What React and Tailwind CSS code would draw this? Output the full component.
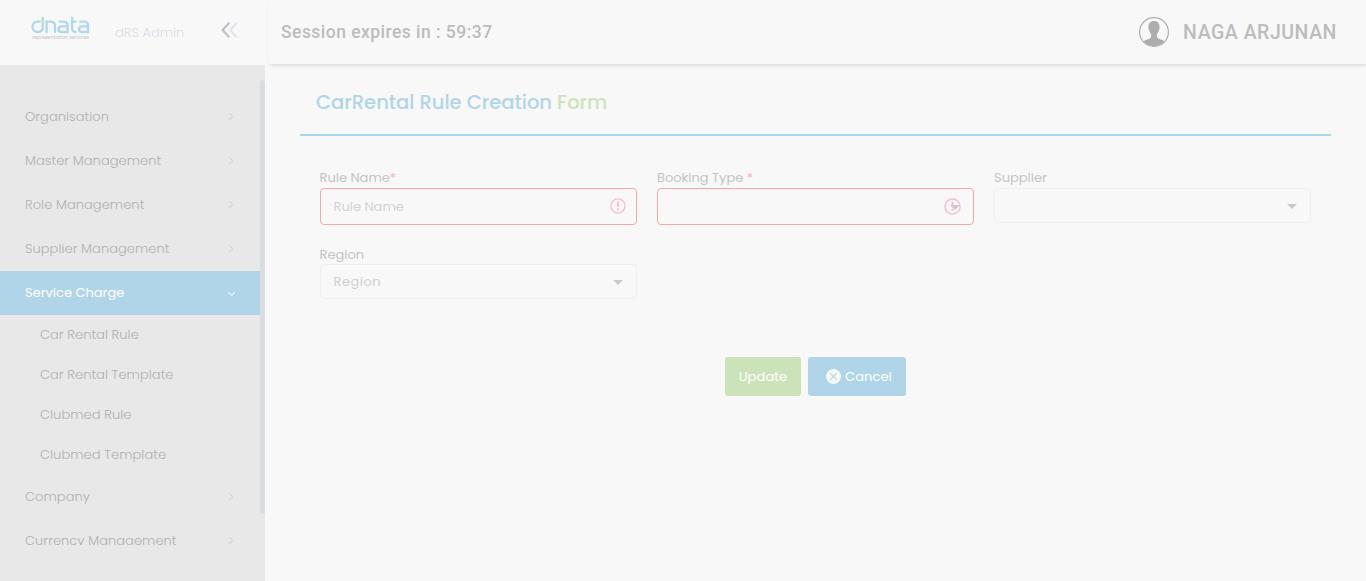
import React from "react";

function ChevronRight() {
  return (
    <svg className="h-2 w-[6px]" viewBox="0 0 6 8" fill="none" stroke="#cbcdd0" strokeWidth="1">
      <path d="M1.2 0.3 L4.8 3.7 L1.2 7.1" />
    </svg>
  );
}

function ChevronDown() {
  return (
    <svg className="mt-[2px] h-[6px] w-2" viewBox="0 0 8 6" fill="none" stroke="#f5f9fb" strokeWidth="1.1">
      <path d="M0.2 1.2 L3.6 4.4 L7 1.2" />
    </svg>
  );
}

function MenuItem({ label }) {
  return (
    <li className="flex h-11 w-[260px] shrink-0 items-center justify-between pr-[26px] pl-[25px] text-[#b0b0b0]">
      <span className="tracking-[0.06px]">{label}</span>
      <ChevronRight />
    </li>
  );
}

function SubItem({ label }) {
  return (
    <li className="flex h-10 shrink-0 items-center pb-px pl-10 text-[#b0b0b0]">
      <span className="tracking-[0.06px]">{label}</span>
    </li>
  );
}

function Logo() {
  return (
    <svg className="h-[26px] w-[60px]" viewBox="0 0 60 26" fill="none">
      <g stroke="#aed9ea" strokeWidth="2.3" strokeLinecap="round">
        <path d="M11.8 2 V10.8 C11.8 14 9.8 16 6.8 16 C3.8 16 1.4 14 1.4 10.8 C1.4 7.6 3.8 5.6 6.8 5.6 H9" />
        <path d="M15.6 16 V5.6 H19.5 C22.6 5.6 24 7.2 24 10 V16" />
        <path d="M28.5 5.6 H32.5 C35.5 5.6 36.6 7 36.6 9.4 V16 H31 C28.4 16 27.4 14.8 27.4 13.2 C27.4 11.6 28.4 10.4 31 10.4 H36" />
        <path d="M41.1 2 V12 C41.1 14.6 42.4 16 44.6 16 M41.1 5.6 H44.8" />
        <path d="M49 5.6 H52.6 C55.6 5.6 57 7 57 9.4 V16 H51.6 C49 16 48 14.8 48 13.2 C48 11.6 49 10.4 51.6 10.4 H56.6" />
      </g>
      <path d="M9 5.6 H13.6" stroke="#d9e6b7" strokeWidth="1.8" />
      <text x="1" y="23" fontSize="5.5" textLength="57" lengthAdjust="spacingAndGlyphs" fill="#c4c4c4" fontFamily="Poppins, sans-serif">
        representation services
      </text>
    </svg>
  );
}

function Avatar() {
  return (
    <svg className="size-[30px]" viewBox="0 0 30 30">
      <circle cx="15" cy="15" r="14.4" fill="none" stroke="#adadad" strokeWidth="1.2" />
      <path
        d="M15 4 C11.2 4 9.4 6.4 9.6 9.6 C8.9 10 9.4 12.4 10.2 13 C10.5 14.8 11.2 16 12.1 17 V20 C11 22.4 6.8 22.3 4.6 24.3 C7.2 27.4 10.8 29.2 15 29.2 C19.2 29.2 22.8 27.4 25.4 24.3 C23.2 22.3 19 22.4 17.9 20 V17 C18.8 16 19.5 14.8 19.8 13 C20.6 12.4 21.1 10 20.4 9.6 C20.6 6.4 18.8 4 15 4 Z"
        fill="#adadad"
      />
    </svg>
  );
}

function Alert({ className }) {
  return (
    <svg className={className} viewBox="0 0 16 16" fill="none" stroke="#f8bdd2">
      <circle cx="8" cy="8" r="7.1" strokeWidth="1.4" />
      <path d="M8 3.5 V9" strokeWidth="1.8" />
      <path d="M8 10.2 V12.2" strokeWidth="1.8" />
    </svg>
  );
}

function Caret() {
  return (
    <svg className="h-[5px] w-[10px]" viewBox="0 0 10 5">
      <path d="M0 0 H10 L5 5 Z" fill="#cacaca" />
    </svg>
  );
}

export default function App() {
  return (
    <div className="flex h-[581px] w-[1366px] overflow-hidden bg-[#f8f8f8] font-[Poppins,Inter,'Open_Sans',sans-serif] text-[13px]">
      <aside className="flex w-[265px] shrink-0 flex-col bg-[#e8e8e8]">
        <div className="flex h-[65px] shrink-0 items-start bg-[#f8f8f8] pl-[31px]">
          <div className="pt-4">
            <Logo />
          </div>
          <span className="mt-[23px] ml-6 w-[106px] text-[13px] leading-5 font-light text-[#d9dde6]">
            dRS Admin
          </span>
          <svg className="mt-[22px] h-4 w-[17px]" viewBox="0 0 17 16" fill="none" strokeWidth="2.2">
            <path d="M8.3 0.8 L1.6 8 L8.3 15.2" stroke="#c0bfcc" />
            <path d="M15.8 0.8 L9.1 8 L15.8 15.2" stroke="#e6e6ea" />
          </svg>
        </div>
        <div className="flex h-[480px] shrink-0 justify-between overflow-hidden">
          <ul className="flex h-[480px] w-[260px] flex-col overflow-hidden pt-[30px] font-light whitespace-nowrap">
            <MenuItem label="Organisation" />
            <MenuItem label="Master Management" />
            <MenuItem label="Role Management" />
            <MenuItem label="Supplier Management" />
            <li className="flex h-11 shrink-0 items-center justify-between bg-[#b0d5e8] pr-6 pl-[25px] font-normal text-white">
              <span>Service Charge</span>
              <ChevronDown />
            </li>
            <SubItem label="Car Rental Rule" />
            <SubItem label="Car Rental Template" />
            <SubItem label="Clubmed Rule" />
            <SubItem label="Clubmed Template" />
            <MenuItem label="Company" />
            <MenuItem label="Currency Management" />
          </ul>
          <div className="mt-[15px] h-[434px] w-[5px] rounded-full bg-[#dadde0]" />
        </div>
      </aside>

      <main className="flex flex-1 flex-col">
        <header className="ml-[3px] flex h-16 shrink-0 items-center justify-between pr-[29px] pl-[13px] font-[Roboto,sans-serif] font-medium text-[#bcbcbc] shadow-[1px_2px_4px_-1px_rgba(0,0,0,0.16)]">
          <span className="pb-px text-[17.5px] leading-[26px] tracking-[0.46px]">Session expires in : 59:37</span>
          <div className="flex items-center gap-[14px]">
            <Avatar />
            <span className="pt-[2px] text-[19.5px] leading-[30px] tracking-[0.54px]">NAGA ARJUNAN</span>
          </div>
        </header>

        <section className="mr-[35px] ml-[35px] flex flex-col">
          <h1 className="h-[72px] border-b-2 border-[#aed6ea] pt-[27px] pl-4 text-[19.5px] leading-6 font-medium text-[#b0d5e8]">
            CarRental Rule Creation <span className="text-[#cce3b9]">Form</span>
          </h1>

          <form className="grid grid-cols-3 gap-x-5 pr-5 pl-5 text-[#c4c4c4]">
            <div className="h-[76px] pt-8">
              <label className="-ml-[0.5px] block h-5 leading-5">
                Rule Name<span className="text-[#fbb4b4]">*</span>
              </label>
              <div className="flex h-[37px] items-center justify-between rounded-[4px] border border-[#fba6a6] pr-[10px] pl-[12.5px]">
                <span className="text-[#d2d2d8]">Rule Name</span>
                <Alert className="mb-px size-4" />
              </div>
            </div>
            <div className="h-[76px] pt-8">
              <label className="block h-5 leading-5">
                Booking Type <span className="text-[#fbb4b4]">*</span>
              </label>
              <div className="relative flex h-[37px] items-center justify-end rounded-[4px] border border-[#fba6a6] pt-[2px] pr-[13px]">
                <Caret />
                <Alert className="absolute top-[8.5px] right-3 size-[17px]" />
              </div>
            </div>
            <div className="h-[76px] pt-8">
              <label className="block h-5 leading-5">Supplier</label>
              <div className="flex h-[35px] items-center justify-end rounded-[4px] border border-[#f0f0f0] pt-px pr-[13px]">
                <Caret />
              </div>
            </div>
            <div className="pt-[33px]">
              <label className="-ml-[0.5px] block h-[19px] leading-5">Region</label>
              <div className="flex h-[35px] items-center justify-between rounded-[4px] border border-[#f0f0f0] pr-[13px] pl-[12.5px]">
                <span className="tracking-[0.5px] text-[#d0d0d0]">Region</span>
                <div className="pt-px">
                  <Caret />
                </div>
              </div>
            </div>
          </form>

          <div className="mt-[58px] flex justify-center gap-[7px] font-normal tracking-[0.1px] text-white">
            <button className="h-[39px] w-[76px] rounded-[3px] bg-[#cce3b9]">Update</button>
            <button className="flex h-[39px] w-[98px] items-center gap-1 rounded-[3px] bg-[#b0d5e8] pl-[18px]">
              <svg className="size-[15px]" viewBox="0 0 15 15" fill="none">
                <circle cx="7.5" cy="7.5" r="7.5" fill="#f7f9f8" />
                <path d="M4.2 4.2 L10.8 10.8 M10.8 4.2 L4.2 10.8" stroke="#b0d5e8" strokeWidth="1.1" />
              </svg>
              Cancel
            </button>
          </div>
        </section>
      </main>
    </div>
  );
}
